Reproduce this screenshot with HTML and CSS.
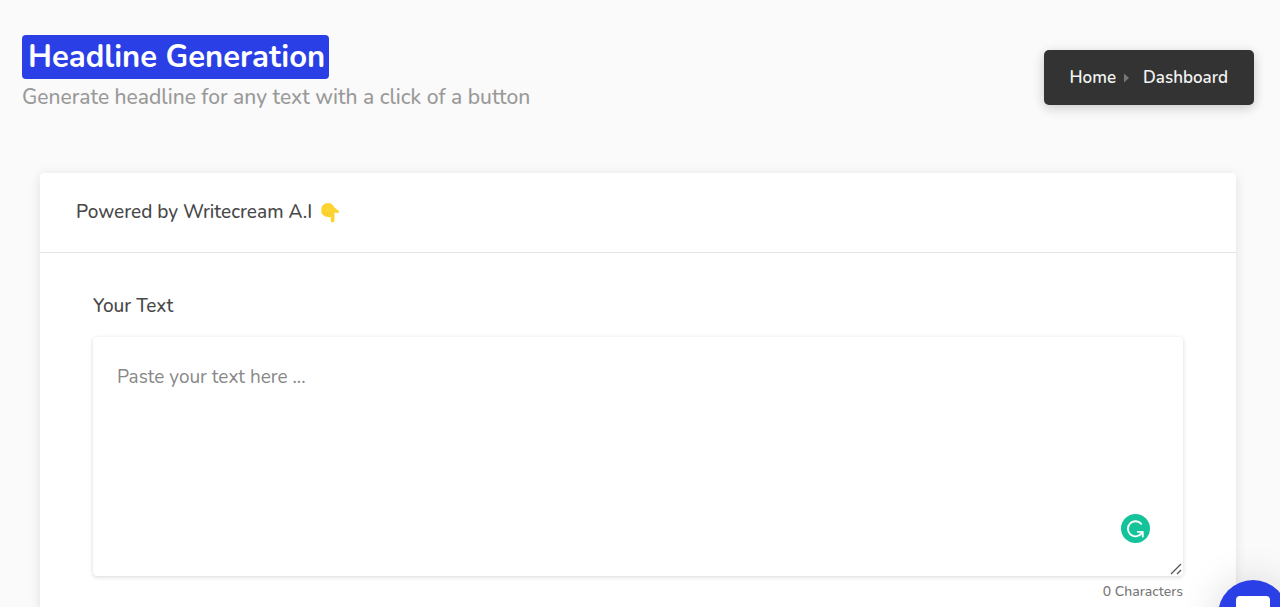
FILE: index.html
```html
<!DOCTYPE html>
<html lang="en">
<head>
<meta charset="utf-8">
<meta name="viewport" content="width=device-width, initial-scale=1">
<title>Headline Generation</title>
<link rel="stylesheet" href="styles.css">
</head>
<body>
<header class="page-header">
  <div class="heading">
    <h1 class="title">Headline Generation</h1>
    <p class="subtitle">Generate headline for any text with a click of a button</p>
  </div>
  <nav class="breadcrumb" aria-label="Breadcrumb">
    <a href="#">Home</a>
    <svg class="caret" viewBox="0 0 5 10" aria-hidden="true"><path d="M0 0.5 5 5 0 9.5z"/></svg>
    <a href="#">Dashboard</a>
  </nav>
</header>
<main class="card">
  <h2 class="card-header">Powered by Writecream A.I
    <svg class="hand" viewBox="0 0 20 20" role="img" aria-label="Pointing down">
      <path fill="#fcd432" d="M1.200 7.500C1.200 2.700 4 0 8 0c3.400 0 5 1.800 6.200 4.300l4.400 3.400c1.200 1-.1 2.700-1.500 2.200l-2.600-.5v8c0 2.600-3.800 2.600-3.800 0v-3.600c-1.200.9-2.600.7-3.200-.2-1.300.7-2.600.3-3-.8C2 12.300 1.200 10 1.200 7.500z"/>
      <path fill="none" stroke="#f2c026" stroke-width=".6" stroke-linecap="round" d="M4.300 12V9M7.300 12.800V9.500M10.600 13V9.500"/>
    </svg>
  </h2>
  <form class="card-body">
    <label class="label" for="source">Your Text</label>
    <div class="field">
      <textarea class="text-box" id="source" placeholder="Paste your text here ..."></textarea>
      <button class="checker" type="button" aria-label="Check grammar">
        <svg viewBox="0 0 28 28" aria-hidden="true">
          <path fill="none" stroke="#fff" stroke-width="1.800" stroke-linecap="round" d="M19.500 9.500A7.300 7.300 0 1 0 19.800 18.700"/>
          <path fill="none" stroke="#fff" stroke-width="1.800" stroke-linecap="round" stroke-linejoin="round" d="M16.200 17.200h4.800v4.600"/>
        </svg>
      </button>
    </div>
    <output class="counter" for="source">0 Characters</output>
  </form>
</main>
<button class="chat" type="button" aria-label="Open chat">
  <svg viewBox="0 0 34 38" aria-hidden="true"><path fill="#fff" d="M4 0h26a4 4 0 0 1 4 4v34l-7-5H4a4 4 0 0 1-4-4V4a4 4 0 0 1 4-4z"/></svg>
</button>
</body>
</html>
```
FILE: styles.css
```css
* {
  box-sizing: border-box;
}

body {
  margin: 0;
  background: #fafafa;
  color: #484848;
  font-family: Nunito, Lato, "Open Sans", sans-serif;
  font-size: 19px;
  overflow-x: hidden;
}

.page-header {
  display: flex;
  justify-content: space-between;
  align-items: flex-start;
  padding: 35px 26px 0 22px;
}

.title {
  width: fit-content;
  margin: 0;
  padding: 0 4px 0 6px;
  border-radius: 4px;
  background: #2b3fe6;
  color: #fff;
  font-size: 31px;
  font-weight: 700;
  line-height: 44px;
}

.subtitle {
  margin: 0;
  color: #999;
  font-size: 21px;
  font-weight: 500;
  line-height: 36px;
}

.breadcrumb {
  display: flex;
  align-items: center;
  margin-top: 15px;
  padding: 0 26px;
  border-radius: 5px;
  background: #333;
  box-shadow: 0 3px 12px rgba(0, 0, 0, 0.2);
  font-size: 17px;
  font-weight: 600;
  line-height: 55px;
}

.breadcrumb a {
  color: #f2f2f2;
  text-decoration: none;
}

.caret {
  width: 5px;
  height: 10px;
  margin: 0 14px 0 8px;
  fill: #777;
}

.card {
  margin: 58px 44px 0 40px;
  border-radius: 4px;
  background: #fff;
  box-shadow: 0 2px 12px rgba(0, 0, 0, 0.1);
}

.card-header {
  display: flex;
  align-items: center;
  gap: 8px;
  margin: 0;
  padding: 0 36px;
  border-bottom: 1px solid #e4e4e4;
  font-size: 19px;
  font-weight: 500;
  line-height: 79px;
}

.hand {
  width: 20px;
  height: 20px;
}

.card-body {
  display: flex;
  flex-direction: column;
  padding: 41px 53px 60px;
}

.label {
  margin-bottom: 19px;
  font-weight: 500;
  line-height: 24px;
}

.field {
  position: relative;
  display: flex;
}

.text-box {
  width: 100%;
  height: 239px;
  padding: 28px 24px;
  border: 0;
  border-radius: 4px;
  background: #fff;
  box-shadow: 0 1px 4px rgba(0, 0, 0, 0.16);
  color: #444;
  font: inherit;
  line-height: 24px;
  resize: vertical;
}

.text-box::placeholder {
  color: #888;
}

.text-box::-webkit-resizer {
  background: url("data:image/svg+xml,%3Csvg xmlns='http://www.w3.org/2000/svg' viewBox='0 0 15 15'%3E%3Cpath d='M3 13 13 3M9 13l4-4' stroke='%23555' stroke-width='1.3'/%3E%3C/svg%3E") center / 100% no-repeat;
}

.checker {
  position: absolute;
  right: 33px;
  bottom: 33px;
  width: 29px;
  height: 29px;
  padding: 0;
  border: 0;
  border-radius: 50%;
  background: #15c39a;
}

.checker svg {
  display: block;
  width: 100%;
}

.counter {
  align-self: flex-end;
  margin-top: 5px;
  color: #777;
  font-size: 14px;
  font-weight: 500;
  line-height: 21px;
}

.chat {
  position: fixed;
  right: -8px;
  bottom: -43px;
  width: 70px;
  height: 70px;
  padding: 16px 18px;
  border: 0;
  border-radius: 50%;
  background: #2b3fe6;
  box-shadow: 0 2px 40px rgba(0, 0, 0, 0.16);
}

.chat svg {
  display: block;
  width: 100%;
}
```
